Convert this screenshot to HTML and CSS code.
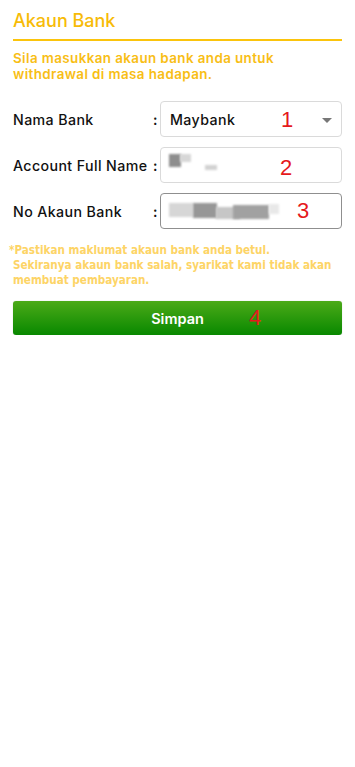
FILE: index.html
```html
<!DOCTYPE html>
<html>
<head>
<meta charset="utf-8">
<link rel="stylesheet" href="styles.css">
</head>
<body>
<div class="page">
  <h1 class="title">Akaun Bank</h1>
  <p class="intro">Sila masukkan akaun bank anda untuk withdrawal di masa hadapan.</p>
  <div class="form">
    <div class="row">
      <label class="label">Nama Bank</label>
      <span class="colon">:</span>
      <div class="field select">
        <span class="value">Maybank</span>
        <span class="caret"></span>
        <span class="mark mark1">1</span>
      </div>
    </div>
    <div class="row">
      <label class="label">Account Full Name</label>
      <span class="colon">:</span>
      <div class="field">
        <span class="blur b1"></span><span class="blur b2"></span><span class="blur b3"></span>
        <span class="mark mark2">2</span>
      </div>
    </div>
    <div class="row">
      <label class="label">No Akaun Bank</label>
      <span class="colon">:</span>
      <div class="field focus">
        <span class="blur c1"></span><span class="blur c2"></span><span class="blur c3"></span><span class="blur c4"></span><span class="blur c5"></span>
        <span class="mark mark3">3</span>
      </div>
    </div>
  </div>
  <p class="warn">*Pastikan maklumat akaun bank anda betul.<br>Sekiranya akaun bank salah, syarikat kami tidak akan membuat pembayaran.</p>
  <button class="btn">Simpan<span class="mark mark4">4</span></button>
</div>
</body>
</html>
```
FILE: styles.css
```css
html, body { margin: 0; padding: 0; background: #fff; }
.page { padding: 0 13px 0 13px; width: 329px; font-family: Inter, "Open Sans", sans-serif; }
.title {
  margin: 0; padding-top: 9px; height: 30px;
  font-size: 18px; font-weight: 500; color: #f7bb07; line-height: 24px;
  border-bottom: 2px solid #fbc40c;
}
.intro {
  margin: 9px 0 0 0; font-size: 13.4px; font-weight: 600; color: #f8be16; line-height: 16px;
  letter-spacing: 0.4px;
}
.form { margin-top: 19px; display: flex; flex-direction: column; gap: 10px; }
.row { display: flex; align-items: center; height: 36px; }
.label { width: 140px; font-size: 14.2px; font-weight: 500; color: #111; letter-spacing: 0.4px; }
.colon { width: 7px; font-size: 14px; font-weight: 600; color: #111; }
.field {
  position: relative; box-sizing: border-box; margin-left: 0; width: 182px; height: 36px;
  border: 1px solid #dadada; border-radius: 4px; display: flex; align-items: center;
  padding-left: 9px;
}
.field.focus { border-color: #8f8f8f; }
.value { font-size: 14.2px; font-weight: 500; color: #111; letter-spacing: 0.4px; }
.caret {
  position: absolute; right: 9px; top: 16px; width: 0; height: 0;
  border-left: 5px solid transparent; border-right: 5px solid transparent; border-top: 5px solid #777;
}
.mark {
  position: absolute; font-family: "Liberation Sans", sans-serif; font-weight: 400;
  font-size: 22px; color: #e5191c; line-height: 22px; letter-spacing: 0;
}
.mark1 { left: 120px; top: 7px; }
.mark2 { left: 119px; top: 9px; }
.mark3 { left: 136px; top: 6px; }
.blur { position: absolute; filter: blur(1px); background: #a8a8a8; }
.b1 { left: 8px; top: 6px; width: 12px; height: 13px; background: #8d8d8d; }
.b2 { left: 19px; top: 6px; width: 11px; height: 8px; background: #d7d7d7; }
.b3 { left: 44px; top: 17px; width: 12px; height: 5px; background: #d2d2d2; }
.c1 { left: 8px; top: 9px; width: 24px; height: 14px; background: #d6d6d6; }
.c2 { left: 32px; top: 9px; width: 24px; height: 15px; background: #979797; }
.c3 { left: 55px; top: 13px; width: 24px; height: 12px; background: #c6c6c6; }
.c4 { left: 72px; top: 11px; width: 36px; height: 14px; background: #a1a1a1; }
.c5 { left: 108px; top: 10px; width: 10px; height: 10px; background: #e8e8e8; }
.warn {
  margin: 14px 0 0 -4px; padding-left: 4px; text-indent: -4px;
  font-family: "DejaVu Sans Condensed", "DejaVu Sans", sans-serif; font-weight: 700;
  font-size: 11.6px; line-height: 15px; color: #fdd466;
}
.btn {
  position: relative; display: block; margin-top: 13px; width: 329px; height: 34px;
  border: none; border-radius: 3px; color: #fff;
  background: linear-gradient(#4caa18, #088800);
  font-family: Inter, "Open Sans", sans-serif; font-weight: 600; font-size: 14.5px;
  box-shadow: 0 0 1px rgba(0,0,0,.3);
}
.mark4 { left: 236px; top: 6px; color: #e5191c; font-weight: 400; }
```
